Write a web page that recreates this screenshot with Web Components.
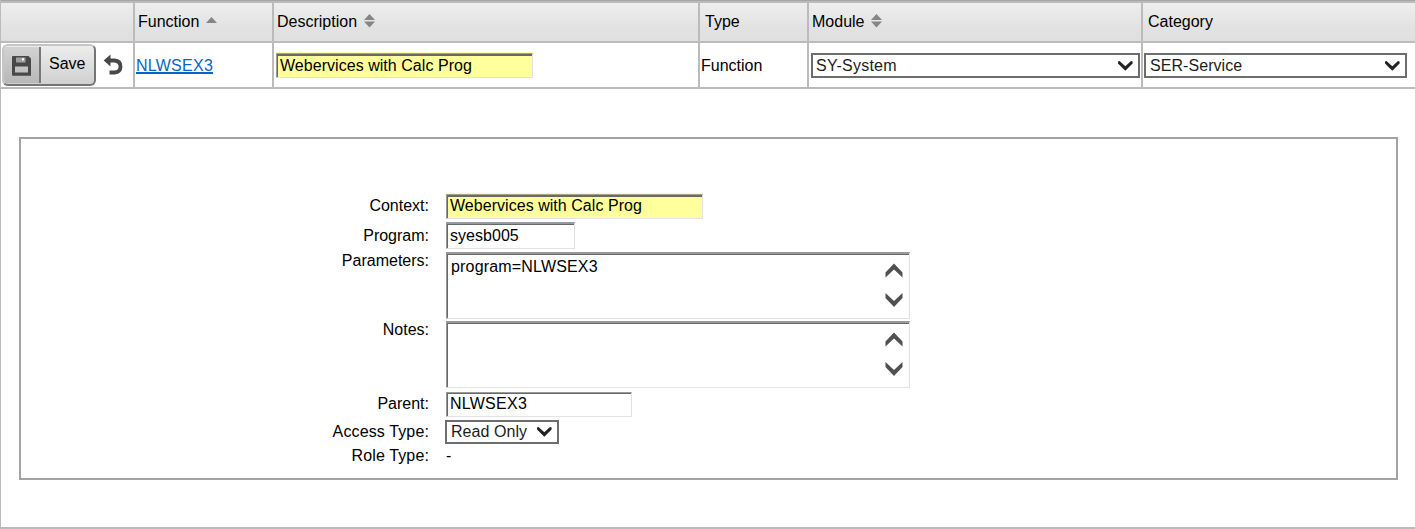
<!DOCTYPE html>
<html lang="en">
<head>
<meta charset="utf-8">
<title>Function maintenance</title>
<style>
body{margin:0;background:#fff;font:16px/18px "Liberation Sans",Arial,sans-serif;color:#000;overflow:hidden}
</style>
</head>
<body>
<function-page></function-page>
<script>
const define=(name,html)=>customElements.define(name,class extends HTMLElement{
  constructor(){
    super();
    const t=document.createElement('template');
    t.innerHTML=html;
    this.attachShadow({mode:'open'}).append(t.content.cloneNode(true));
  }
});

define('sort-mark',`<style>:host{display:block;width:12px;height:14px}svg{display:block}:host([single]) svg{margin-top:3px}:host([single]) .down{display:none}</style>
<svg width="12" height="14"><path d="M0 6 5.5 0 11 6Z" fill="#858585"/><path class="down" d="M0 7.5 5.5 13.5 11 7.5Z" fill="#858585"/></svg>`);

define('head-cell',`<style>:host{display:flex;box-sizing:border-box;height:38px;padding:10px 0 0 var(--inset,4px);background:linear-gradient(#eee,#e2e2e2 65%,#e0e0e0);border-right:2px solid #bbb;white-space:nowrap}
:host([last]){border-right:0}::slotted(sort-mark){margin:1px 0 0 7px}</style><slot></slot>`);

define('body-cell',`<style>:host{display:flex;box-sizing:border-box;height:44px;padding:9px 0 0 2px;border-right:2px solid #bbb;white-space:nowrap}
:host([last]){border-right:0}:host([tools]){padding:1px 0 0 1px}:host([plain]){padding:14px 0 0 1px}</style><slot></slot>`);

define('save-button',`<style>:host{display:flex;box-sizing:border-box;width:94px;height:42px;border:2px solid;border-color:#c6c6c6 #757575 #757575 #c6c6c6;border-radius:6px;background:linear-gradient(#ededed,#d0d0d0);overflow:hidden}
.icon{box-sizing:border-box;width:37px;height:36px;margin-top:1px;border-right:2px solid #777;background:linear-gradient(#d2d2d2,#b8b8b8);padding:9px 0 0 8px}svg{display:block}.text{padding:9px 0 0 8px}</style>
<div class="icon"><svg width="19" height="20"><path fill="#484848" fill-rule="evenodd" d="M1 0H16.5L19 2.5V19.7H1Q0 19.7 0 18.7V1Q0 0 1 0ZM3 10.5V16.5H16V10.5Z"/><path d="M4 1.5H13.5V6.5H4Z" fill="#a0a0a0"/><path d="M10 2H12V4.5H10Z" fill="#eee"/></svg></div><div class="text"><slot></slot></div>`);

define('undo-icon',`<style>:host{display:block;width:21px;height:21px;margin:10px 0 0 7px}</style>
<svg width="21" height="21"><path d="M7 6.5H11.5Q17.5 7 17.5 12.5T11.5 18.5H6.5" fill="none" stroke="#484848" stroke-width="3.8"/><path d="M.7 6.5 7.5 .5V12.5Z" fill="#484848"/></svg>`);

define('text-field',`<style>:host{display:block;box-sizing:border-box;width:var(--w);height:var(--h,26px);border:1px solid;border-color:#999 #e2e2e2 #e2e2e2 #999;box-shadow:inset 1px 1px #696969;background:var(--bg,#fff);padding:var(--pt,3px) 0 0 3px;letter-spacing:var(--ls,0.04px);white-space:nowrap}
:host([changed]){--bg:#ffff9c;height:25px;border-top-color:#a5a58a;box-shadow:inset 1px 1px #696969,inset 0 2px #696969,0 -1px #ffffa5}
:host([area]){border-top:2px solid #999}</style><slot></slot>`);

define('scroll-arrows',`<style>:host{display:block;width:18px}svg{display:block}</style>
<svg width="18" height="46"><path d="M.5 10.5 9 1.5 17.5 10.5V15.5L9 7.5 .5 15.5Z" fill="#505050"/><path d="M.5 31 9 39 17.5 31V36L9 45 .5 36Z" fill="#505050"/></svg>`);

define('text-box',`<style>:host{display:flex;box-sizing:border-box;width:464px;height:67px;border:1px solid;border-top-width:2px;border-color:#999 #e2e2e2 #e2e2e2 #999;box-shadow:inset 1px 1px #696969;padding:4px 6px 0 4px;justify-content:space-between;letter-spacing:.17px}
scroll-arrows{margin-top:4px}</style><span><slot></slot></span><scroll-arrows></scroll-arrows>`);

define('drop-list',`<style>:host{display:flex;box-sizing:border-box;width:var(--w);height:var(--h,25px);border:2px solid #6d6d6d;background:#fff;color:#1c1c1c;justify-content:space-between;padding:var(--pt,2px) 5px 0 var(--pl,4px);white-space:nowrap;letter-spacing:var(--ls,.06px)}svg{display:block;margin-top:var(--at,4px)}</style>
<slot></slot><svg width="15" height="11"><path d="M0 .5 1.5 0 7.3 5.3 13 0 14.6.5V2.5L7.3 9.7 0 2.5Z" fill="#222"/></svg>`);

define('form-row',`<style>:host{display:grid;grid-template-columns:408px 1fr;column-gap:17px;height:var(--rh);align-items:start}
.label{text-align:right;padding-top:var(--lt,1px);letter-spacing:var(--lls,0)}.value{padding-top:var(--vt,0)}</style><div class="label"><slot name="label"></slot></div><div class="value"><slot></slot></div>`);

define('function-page',`<style>
:host{display:flex;flex-direction:column;box-sizing:border-box;height:529px;border-left:1px solid #bbb;border-bottom:2px solid #bbb}
.grid{display:grid;grid-template-columns:134px 139px 426px 109px 334px 1fr;row-gap:2px;background:#bbb;border-top:1px solid #a5a5a5;border-bottom:2px solid #bbb;padding-top:2px}
body-cell{background:#fff}
a{color:#0a63c6;text-decoration:underline;text-decoration-thickness:2px;text-underline-offset:1px;text-decoration-skip-ink:none;letter-spacing:.25px}
.panel{box-sizing:border-box;width:1379px;height:343px;margin:48px 0 0 18px;border:2px solid #a3a3a3;padding-top:53px}
</style>
<div class="grid">
<head-cell></head-cell>
<head-cell style="--inset:3px">Function<sort-mark single></sort-mark></head-cell>
<head-cell style="--inset:3px">Description<sort-mark></sort-mark></head-cell>
<head-cell style="--inset:5px">Type</head-cell>
<head-cell style="--inset:3px">Module<sort-mark></sort-mark></head-cell>
<head-cell last style="--inset:5px">Category</head-cell>
<body-cell tools><save-button>Save</save-button><undo-icon></undo-icon></body-cell>
<body-cell plain><a>NLWSEX3</a></body-cell>
<body-cell><text-field changed style="--w:257px;--pt:3px;margin-top:1px">Webervices with Calc Prog</text-field></body-cell>
<body-cell plain>Function</body-cell>
<body-cell><drop-list style="--w:329px;--pl:3px;--ls:.25px;margin-top:1px">SY-System</drop-list></body-cell>
<body-cell last style="padding-left:1px"><drop-list style="--w:263px;margin-top:1px">SER-Service</drop-list></body-cell>
</div>
<div class="panel">
<form-row style="--rh:30px;--lt:5px;--vt:2px"><span slot="label">Context:</span><text-field changed style="--w:257px;--pt:2px">Webervices with Calc Prog</text-field></form-row>
<form-row style="--rh:29px;--lt:5px"><span slot="label">Program:</span><text-field area style="--w:129px;--h:27px;--pt:3px">syesb005</text-field></form-row>
<form-row style="--rh:69px;--vt:1px"><span slot="label">Parameters:</span><text-box>program=NLWSEX3</text-box></form-row>
<form-row style="--rh:71px;--vt:1px"><span slot="label">Notes:</span><text-box></text-box></form-row>
<form-row style="--rh:29px;--lt:4px;--vt:1px"><span slot="label">Parent:</span><text-field style="--w:186px;--h:25px;--pt:2px;--ls:.25px">NLWSEX3</text-field></form-row>
<form-row style="--rh:26px;--lt:3px;--lls:.13px"><span slot="label">Access Type:</span><drop-list style="--w:114px;--h:24px;--pt:1px;--at:4px;margin-left:-1px">Read Only</drop-list></form-row>
<form-row style="--rh:20px;--vt:1px;--lls:.13px"><span slot="label">Role Type:</span>-</form-row>
</div>`);
</script>
</body>
</html>
